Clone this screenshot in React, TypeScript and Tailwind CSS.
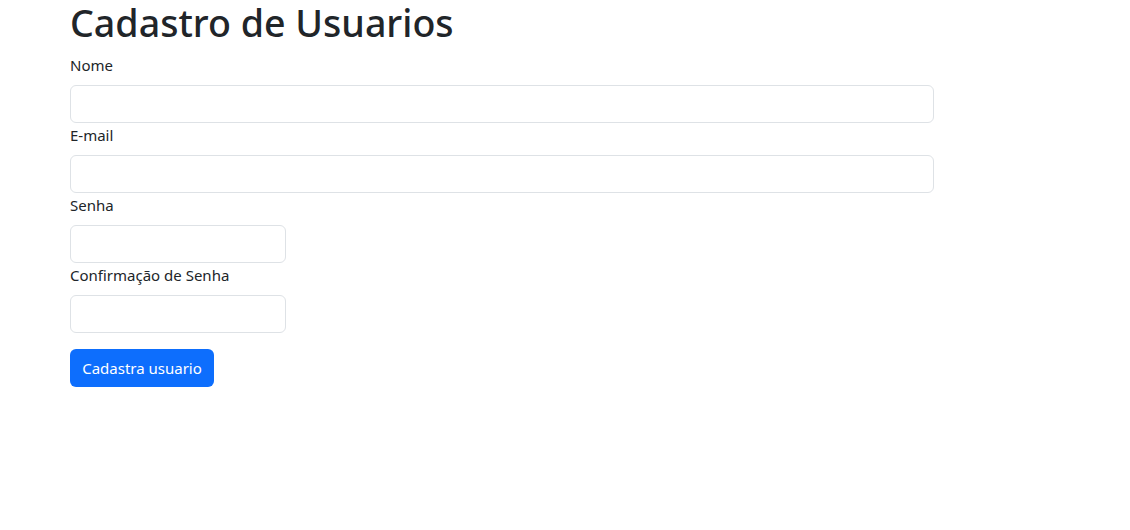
const fields = [
  { label: "Nome", type: "text", wide: true },
  { label: "E-mail", type: "email", wide: true },
  { label: "Senha", type: "password", wide: false },
  { label: "Confirmação de Senha", type: "password", wide: false },
];

export default function App() {
  return (
    <div className="min-h-[530px] bg-white pl-[70px] font-['Noto_Sans',sans-serif] text-[#212529]">
      <h1 className="mb-2 text-[37.6px] leading-[45px] font-medium">
        Cadastro de Usuarios
      </h1>
      <form className="w-[864px]" onSubmit={(e) => e.preventDefault()}>
        {fields.map((f) => (
          <div key={f.label}>
            <label className="mb-2 block h-6 text-[15px] leading-6">{f.label}</label>
            <input
              type={f.type}
              className={`block h-[38px] rounded-md border border-[#dee2e6] bg-white px-3 outline-none ${
                f.wide ? "w-[864px]" : "w-[216px]"
              }`}
            />
          </div>
        ))}
        <button
          type="submit"
          className="mt-4 h-[38px] w-[144px] rounded-md bg-[#0d6efd] text-[15px] text-white"
        >
          Cadastra usuario
        </button>
      </form>
    </div>
  );
}
